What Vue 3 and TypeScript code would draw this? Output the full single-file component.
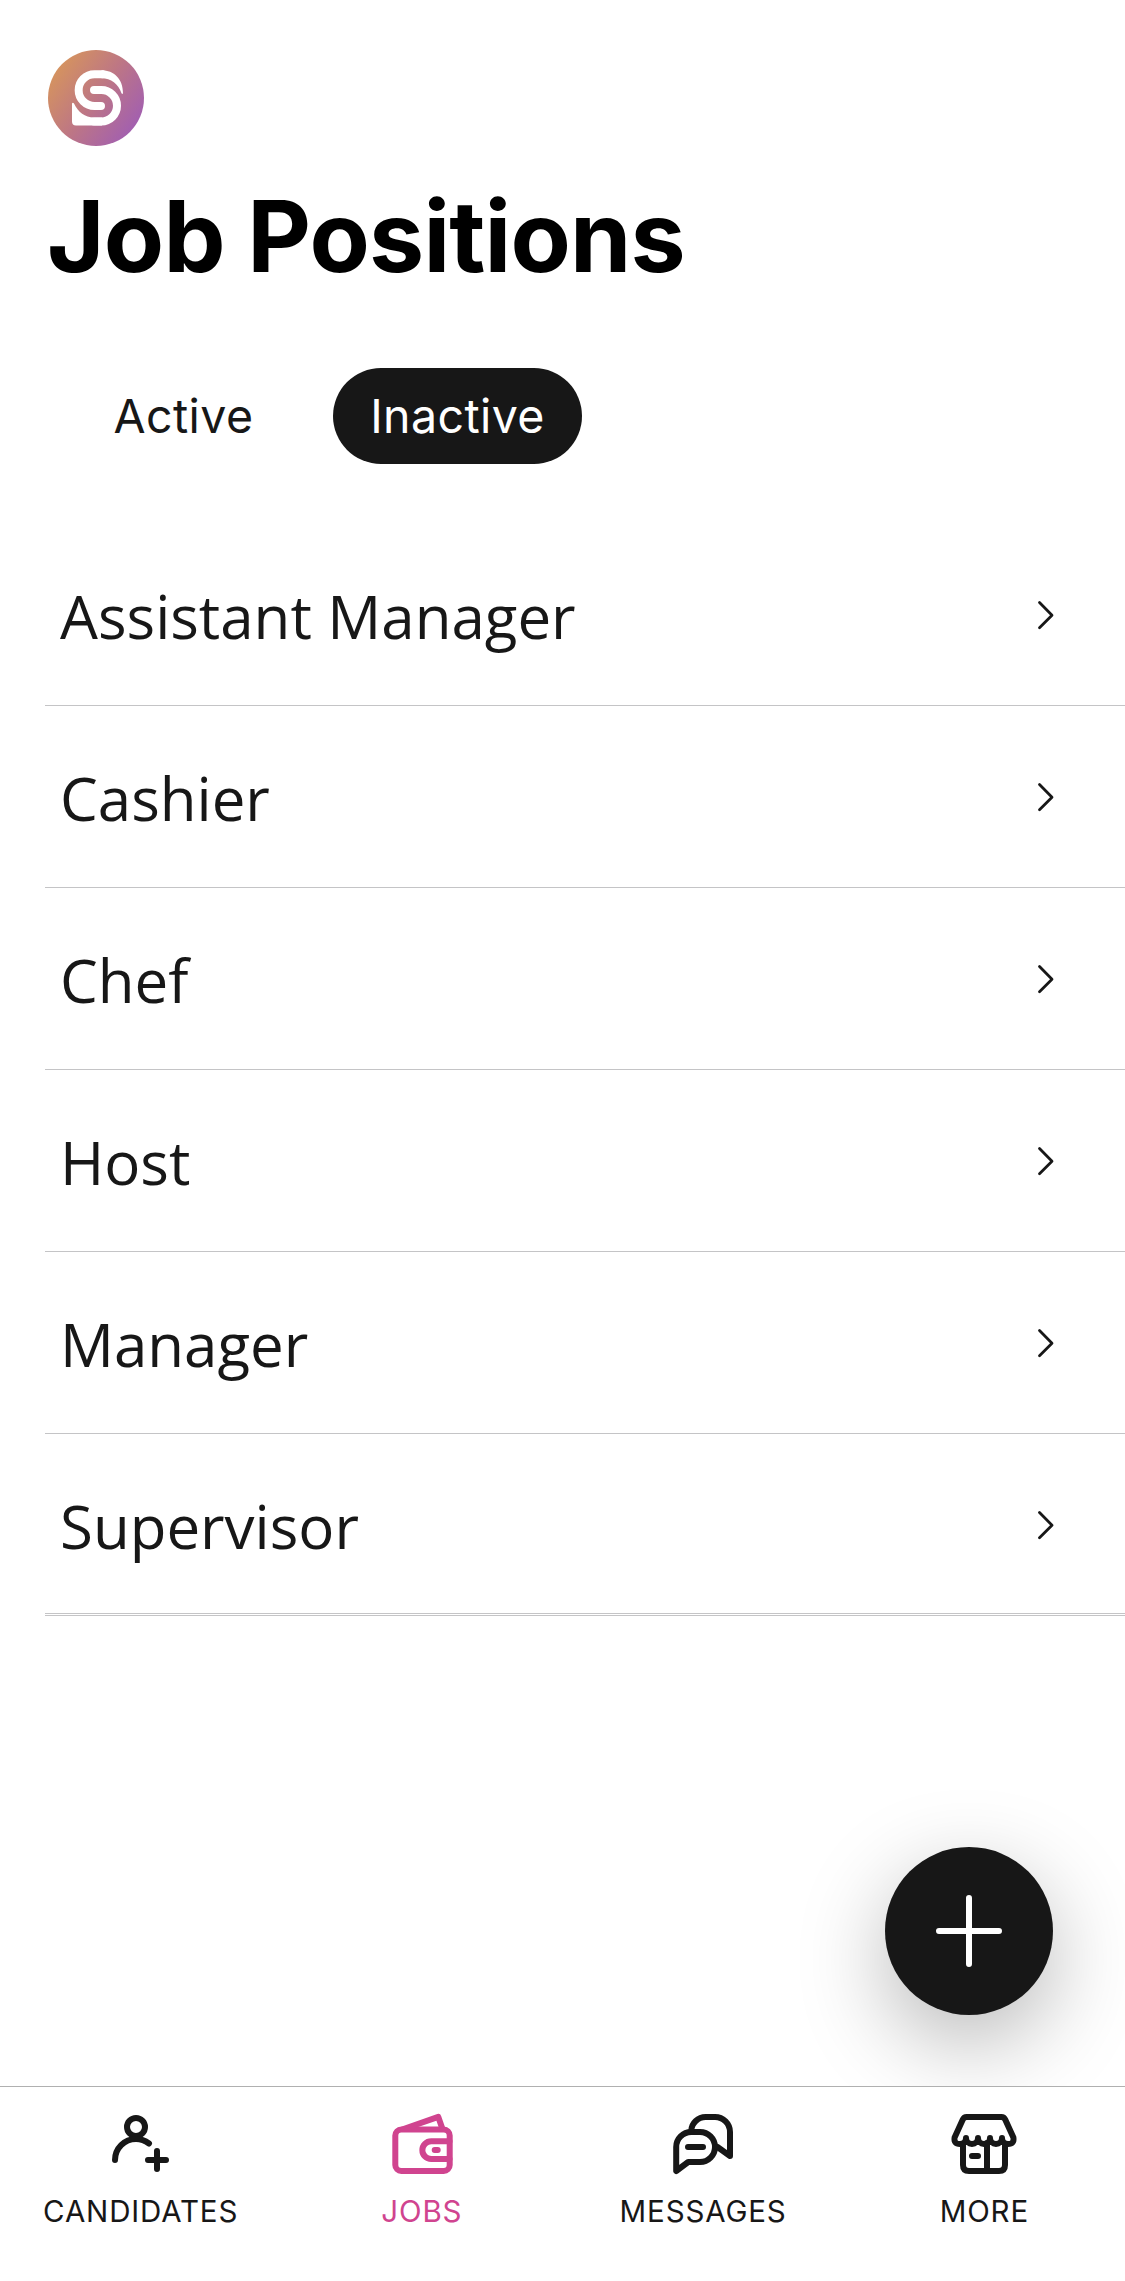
<script setup lang="ts">
import { ref } from 'vue'

type TabId = 'candidates' | 'jobs' | 'messages' | 'more'

const filters: string[] = ['Active', 'Inactive']
const activeFilter = ref<string>('Inactive')

const positions: string[] = ['Assistant Manager', 'Cashier', 'Chef', 'Host', 'Manager', 'Supervisor']

const tabs: { id: TabId; label: string }[] = [
  { id: 'candidates', label: 'CANDIDATES' },
  { id: 'jobs', label: 'JOBS' },
  { id: 'messages', label: 'MESSAGES' },
  { id: 'more', label: 'MORE' },
]
const activeTab = ref<TabId>('jobs')
</script>

<template>
  <div class="screen">
    <header class="header">
      <svg class="logo" viewBox="0 0 96 96">
        <defs>
          <linearGradient id="logo-fill" x1="0.08" y1="0.2" x2="0.92" y2="0.8">
            <stop offset="0" stop-color="#d5935f" />
            <stop offset="0.5" stop-color="#bd7685" />
            <stop offset="1" stop-color="#a25fb0" />
          </linearGradient>
        </defs>
        <circle cx="48" cy="48" r="48" fill="url(#logo-fill)" />
        <g fill="none" stroke="#fff" stroke-width="8" stroke-linecap="round">
          <path d="M54 24.3H46.500A15.850 15.850 0 0 0 46.500 56H53" />
          <path d="M46 40H53.300A15.700 15.700 0 0 1 53.300 71.400H46" />
        </g>
        <path d="M53.500 20.300C66 20.300 75 29 75 43.300Q74.300 44.800 73.500 43.300C70.500 34 63 28.300 53.500 28.300Z" fill="#fff" />
        <path d="M24 53.500Q24.800 52 26 53.500C30 62 37 67.500 46 67.500H54V75.400H28Q24 75.400 24 71.400Z" fill="#fff" />
      </svg>
      <h1 class="title">Job Positions</h1>
    </header>

    <div class="filters">
      <button
        v-for="f in filters"
        :key="f"
        class="filter"
        :class="{ selected: f === activeFilter }"
        @click="activeFilter = f"
      >{{ f }}</button>
    </div>

    <ul class="list">
      <li v-for="p in positions" :key="p" class="row">
        <span class="name">{{ p }}</span>
        <svg class="chevron" viewBox="0 0 18 30">
          <path d="M2.500 2.500L15 15.200L2.500 27.700" />
        </svg>
      </li>
    </ul>

    <button class="fab" aria-label="Add position">
      <svg viewBox="0 0 168 168">
        <path d="M84 51V117M54 84H114" />
      </svg>
    </button>

    <nav class="tabbar">
      <button
        v-for="t in tabs"
        :key="t.id"
        class="tab"
        :class="{ current: t.id === activeTab }"
        @click="activeTab = t.id"
      >
        <svg class="icon" viewBox="0 0 72 72">
          <template v-if="t.id === 'candidates'">
            <circle cx="31" cy="19" r="9" />
            <path d="M10 52A21 21 0 0 1 31 31Q38 31 44 35.500M52 43V61M43 52H61" />
          </template>
          <template v-else-if="t.id === 'jobs'">
            <rect x="9.300" y="21.500" width="54.400" height="41.500" rx="6" />
            <path d="M17.500 21L52.300 8.900L56.500 21M63.500 33.300H45.200A8.850 8.850 0 0 0 45.200 51H63.500M48.700 42H51.700" />
          </template>
          <template v-else-if="t.id === 'messages'">
            <path d="M9.200 63V39A15 15 0 0 1 24.200 24H33A15 15 0 0 1 33 54H21.200Z" />
            <path d="M24.200 23A14.500 14.500 0 0 1 39 9H48A15 15 0 0 1 63 24V48L50.500 39M21 39H36" />
          </template>
          <template v-else>
            <path d="M18.600 9H53.400Q56 9 57.200 11.600L65.400 29.500Q66.500 36 60 36A6 6 0 0 1 54 30A6 6 0 0 1 42 30A6 6 0 0 1 30 30A6 6 0 0 1 18 30A6 6 0 0 1 12 36Q5.500 36 6.600 29.500L14.800 11.600Q16 9 18.600 9Z" />
            <path d="M15 37V57Q15 63 21 63H51Q57 63 57 57V37M39 35V63M24 48H30" />
          </template>
        </svg>
        <span class="label">{{ t.label }}</span>
      </button>
    </nav>
  </div>
</template>

<style>
body {
  background: #fff;
}
</style>

<style scoped>
.screen {
  position: relative;
  display: flex;
  flex-direction: column;
  width: 1125px;
  height: 2281px;
  overflow: hidden;
  background: #fff;
  color: #171717;
  font-family: Inter, "Liberation Sans", sans-serif;
}
button {
  margin: 0;
  padding: 0;
  border: 0;
  background: none;
  color: inherit;
  font: inherit;
}
.header {
  padding: 50px 48px 0;
}
.logo {
  display: block;
  width: 96px;
  height: 96px;
}
.title {
  margin: 31px 0 0 -1px;
  color: #000;
  font-size: 98.5px;
  font-weight: 700;
  line-height: 120px;
  letter-spacing: -0.8px;
  white-space: nowrap;
}
.filters {
  display: flex;
  gap: 25px;
  margin: 71px 0 0 59px;
}
.filter {
  width: 249px;
  height: 96px;
  border-radius: 48px;
  font-size: 46.5px;
  line-height: 96px;
  letter-spacing: 0.4px;
  text-align: center;
}
.filter.selected {
  background: #171717;
  color: #fff;
}
.list {
  margin: 60px 0 0 45px;
  padding: 0;
  border-bottom: 1px solid #c4c4c6;
  list-style: none;
}
.row {
  display: flex;
  align-items: center;
  justify-content: space-between;
  box-sizing: border-box;
  height: 182px;
  padding: 2px 70px 0 15px;
  border-bottom: 1px solid #c4c4c6;
}
.row:last-child {
  height: 180px;
  margin-bottom: 1px;
  padding-top: 4px;
}
.name {
  font-family: "Open Sans", "Noto Sans", sans-serif;
  font-size: 60px;
  line-height: 82px;
}
.chevron {
  width: 18px;
  height: 30px;
  margin-bottom: 1px;
  fill: none;
  stroke: #171717;
  stroke-width: 2.8;
  stroke-linecap: round;
  stroke-linejoin: round;
}
.fab {
  position: absolute;
  right: 72px;
  bottom: 266px;
  width: 168px;
  height: 168px;
  border-radius: 50%;
  background: #171717;
  box-shadow: 0 28px 88px rgba(0, 0, 0, 0.28);
}
.fab svg {
  display: block;
  fill: none;
  stroke: #fff;
  stroke-width: 6;
  stroke-linecap: round;
}
.tabbar {
  position: relative;
  display: flex;
  box-sizing: border-box;
  height: 195px;
  margin-top: auto;
  border-top: 1px solid #b0b0b0;
  background: #fff;
}
.tab {
  display: flex;
  flex: 1;
  flex-direction: column;
  align-items: center;
  padding-top: 21px;
}
.tab.current {
  color: #d0448f;
}
.icon {
  width: 72px;
  height: 72px;
  fill: none;
  stroke: currentColor;
  stroke-width: 6;
  stroke-linecap: round;
  stroke-linejoin: round;
}
.label {
  margin-top: 13px;
  font-size: 29.5px;
  line-height: 36px;
  letter-spacing: 0.85px;
}
</style>
